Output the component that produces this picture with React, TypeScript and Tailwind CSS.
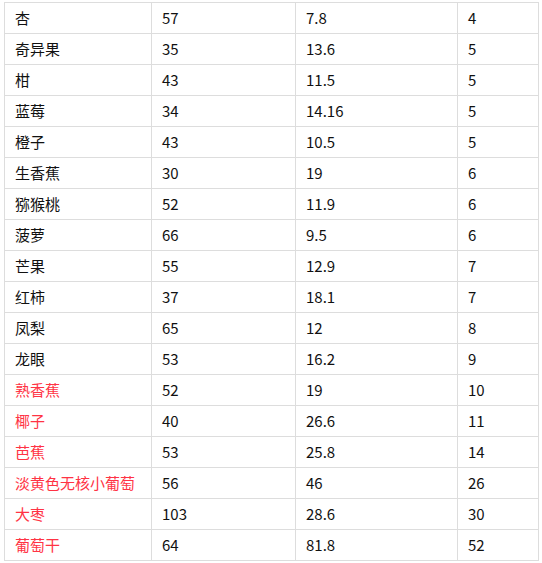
const rows: [string, string, string, string, boolean?][] = [
  ['杏', '57', '7.8', '4'],
  ['奇异果', '35', '13.6', '5'],
  ['柑', '43', '11.5', '5'],
  ['蓝莓', '34', '14.16', '5'],
  ['橙子', '43', '10.5', '5'],
  ['生香蕉', '30', '19', '6'],
  ['猕猴桃', '52', '11.9', '6'],
  ['菠萝', '66', '9.5', '6'],
  ['芒果', '55', '12.9', '7'],
  ['红柿', '37', '18.1', '7'],
  ['凤梨', '65', '12', '8'],
  ['龙眼', '53', '16.2', '9'],
  ['熟香蕉', '52', '19', '10', true],
  ['椰子', '40', '26.6', '11', true],
  ['芭蕉', '53', '25.8', '14', true],
  ['淡黄色无核小葡萄', '56', '46', '26', true],
  ['大枣', '103', '28.6', '30', true],
  ['葡萄干', '64', '81.8', '52', true],
];

export default function App() {
  return (
    <div className="bg-white w-[542px] h-[563px] pt-[2px] pl-[4px] font-['Noto_Sans_CJK_SC',sans-serif] text-[15px] text-[#111]">
      <table className="border-collapse table-fixed w-[534px]">
        <colgroup>
          <col className="w-[147px]" />
          <col className="w-[144px]" />
          <col className="w-[162px]" />
          <col className="w-[81px]" />
        </colgroup>
        <tbody>
          {rows.map(([name, a, b, c, red]) => (
            <tr key={name} className="h-[31px]">
              <td className={`border border-[#ddd] px-[10px] py-0 leading-[30px] ${red ? 'text-[#ff3344]' : ''}`}>{name}</td>
              <td className="border border-[#ddd] px-[10px] py-0 leading-[30px]">{a}</td>
              <td className="border border-[#ddd] px-[10px] py-0 leading-[30px]">{b}</td>
              <td className="border border-[#ddd] px-[10px] py-0 leading-[30px]">{c}</td>
            </tr>
          ))}
        </tbody>
      </table>
    </div>
  );
}
